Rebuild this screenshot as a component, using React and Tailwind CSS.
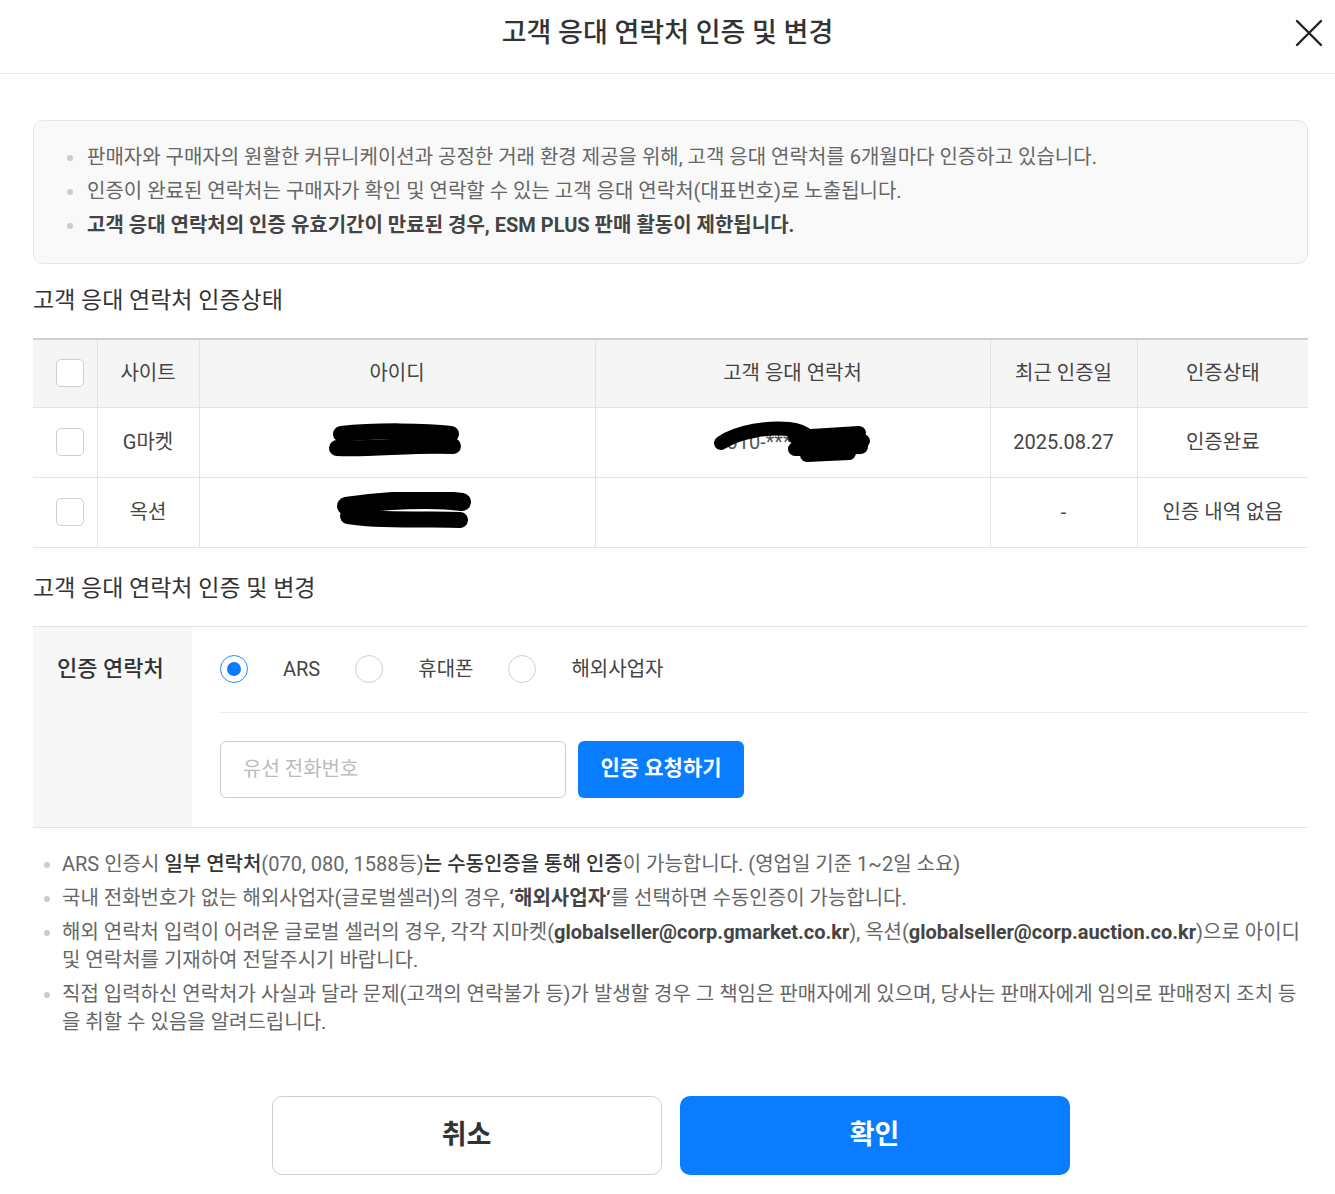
import { useState } from "react";

const rows = [
  { site: "G마켓", date: "2025.08.27", status: "인증완료", phone: true, blob: "a" },
  { site: "옥션", date: "-", status: "인증 내역 없음", phone: false, blob: "b" },
];

// 가림 처리(검은 낙서) 모양
function Scribble({ kind }) {
  if (kind === "a") {
    return (
      <svg width="140" height="40" viewBox="0 0 140 40">
        <path d="M14 12 C 50 8, 100 9, 124 12" stroke="#000" strokeWidth="16" strokeLinecap="round" fill="none" />
        <path d="M10 26 C 40 28, 90 22, 126 24" stroke="#000" strokeWidth="16" strokeLinecap="round" fill="none" />
      </svg>
    );
  }
  return (
    <svg width="140" height="40" viewBox="0 0 140 40">
      <path d="M12 14 C 50 8, 100 6, 128 10" stroke="#000" strokeWidth="18" strokeLinecap="round" fill="none" />
      <path d="M14 24 C 50 30, 100 26, 126 28" stroke="#000" strokeWidth="16" strokeLinecap="round" fill="none" />
    </svg>
  );
}

function PhoneScribble() {
  return (
    <svg width="166" height="42" viewBox="0 0 166 42" className="absolute left-[-4px] top-[-2px]">
      <path d="M12 22 C 30 10, 60 6, 80 8 C 90 9, 96 12, 100 16" stroke="#000" strokeWidth="14" strokeLinecap="round" fill="none" />
      <path d="M86 16 L 150 12 M 86 28 L 152 26 M 92 22 L 154 20 M 98 34 L 140 32" stroke="#000" strokeWidth="14" strokeLinecap="round" fill="none" />
    </svg>
  );
}

function Check() {
  return <span className="block w-[28px] h-[28px] rounded-[5px] border border-[#cfcfcf] bg-white" />;
}

function Radio({ on }) {
  return on ? (
    <span className="flex items-center justify-center w-[28px] h-[28px] rounded-full border-[1.5px] border-[#2a8bff] bg-white">
      <span className="block w-[14px] h-[14px] rounded-full bg-[#0a7cff]" />
    </span>
  ) : (
    <span className="block w-[28px] h-[28px] rounded-full border border-[#cfcfcf] bg-white" />
  );
}

function Dot() {
  return <span className="shrink-0 mt-[12px] w-[6px] h-[6px] rounded-full bg-[#cccccc]" />;
}

export default function App() {
  const [method, setMethod] = useState("ARS");

  return (
    <div className="w-[1335px] min-h-[1194px] bg-white text-[#333]" style={{ fontFamily: 'Roboto, "Noto Sans CJK KR", sans-serif' }}>
      {/* 헤더 */}
      <header className="relative h-[74px] flex items-center justify-center pb-[6px] border-b border-[#ececec]">
        <h1 className="text-[27px] font-medium text-[#333]">고객 응대 연락처 인증 및 변경</h1>
        <button className="absolute right-[12px] top-[19px] w-[28px] h-[28px]">
          <svg width="28" height="28" viewBox="0 0 28 28">
            <path d="M2 2 L26 26 M26 2 L2 26" stroke="#222" strokeWidth="2.4" strokeLinecap="round" />
          </svg>
        </button>
      </header>

      <div className="pl-[33px] pr-[27px] pt-[46px]">
        {/* 안내 박스 */}
        <div className="rounded-[10px] border border-[#e6e6e6] bg-[#f9f9f9] pl-[33px] pr-4 pt-[22px] pb-[24px] text-[20px] text-[#666]">
          <ul className="flex flex-col gap-[6px] leading-[28px]">
            <li className="flex gap-[14px]"><Dot />판매자와 구매자의 원활한 커뮤니케이션과 공정한 거래 환경 제공을 위해, 고객 응대 연락처를 6개월마다 인증하고 있습니다.</li>
            <li className="flex gap-[14px]"><Dot />인증이 완료된 연락처는 구매자가 확인 및 연락할 수 있는 고객 응대 연락처(대표번호)로 노출됩니다.</li>
            <li className="flex gap-[14px] font-bold text-[#444]"><Dot />고객 응대 연락처의 인증 유효기간이 만료된 경우, ESM PLUS 판매 활동이 제한됩니다.</li>
          </ul>
        </div>

        {/* 인증상태 */}
        <h2 className="mt-[22px] text-[23px] text-[#333] leading-[30px]">고객 응대 연락처 인증상태</h2>
        <table className="mt-[22px] w-full border-collapse text-[20px] text-[#444]">
          <thead>
            <tr className="h-[68px] bg-[#f5f5f5] border-t-2 border-[#cfcfcf]">
              <th className="w-[64px] border-r border-[#e3e3e3] font-normal"><div className="flex pl-[23px]"><Check /></div></th>
              <th className="w-[102px] border-r border-[#e3e3e3] font-normal">사이트</th>
              <th className="w-[396px] border-r border-[#e3e3e3] font-normal">아이디</th>
              <th className="w-[395px] border-r border-[#e3e3e3] font-normal">고객 응대 연락처</th>
              <th className="w-[147px] border-r border-[#e3e3e3] font-normal">최근 인증일</th>
              <th className="font-normal">인증상태</th>
            </tr>
          </thead>
          <tbody>
            {rows.map((r) => (
              <tr key={r.site} className="h-[70px] border-t border-b border-[#e3e3e3]">
                <td className="border-r border-[#e3e3e3]"><div className="flex pl-[23px]"><Check /></div></td>
                <td className="border-r border-[#e3e3e3] text-center">{r.site}</td>
                <td className="border-r border-[#e3e3e3]">
                  <div className={r.blob === "a" ? "flex justify-center" : "flex justify-center pl-[14px]"}>
                    <Scribble kind={r.blob} />
                  </div>
                </td>
                <td className="border-r border-[#e3e3e3]">
                  {r.phone && (
                    <div className="flex justify-center">
                      <div className="relative w-[160px] h-[38px] pl-[14px] leading-[38px] text-[#555]">
                        010-****-****
                        <PhoneScribble />
                      </div>
                    </div>
                  )}
                </td>
                <td className="border-r border-[#e3e3e3] text-center">{r.date}</td>
                <td className="text-center">{r.status}</td>
              </tr>
            ))}
          </tbody>
        </table>

        {/* 인증 및 변경 */}
        <h2 className="mt-[26px] text-[23px] text-[#333] leading-[30px]">고객 응대 연락처 인증 및 변경</h2>
        <div className="mt-[22px] flex border-t border-b border-[#e3e3e3]">
          <div className="w-[159px] shrink-0 bg-[#f7f7f7] pl-[24px] pt-[27px] text-[22px] text-[#333] font-medium leading-[30px]">인증 연락처</div>
          <div className="flex-1 pl-[28px]">
            <div className="h-[86px] flex items-center border-b border-[#ececec] text-[20px] text-[#444]">
              {["ARS", "휴대폰", "해외사업자"].map((m) => (
                <label key={m} className="flex items-center mr-[35px] cursor-pointer" onClick={() => setMethod(m)}>
                  <Radio on={method === m} />
                  <span className="ml-[35px]">{m}</span>
                </label>
              ))}
            </div>
            <div className="flex gap-[12px] pt-[28px] pb-[29px]">
              <input
                placeholder="유선 전화번호"
                className="w-[346px] h-[57px] rounded-[6px] border border-[#cdcdcd] px-[22px] text-[20px] placeholder:text-[#bbb] outline-none"
              />
              <button className="w-[166px] h-[57px] rounded-[6px] bg-[#0a7cff] text-white text-[21px] font-bold">인증 요청하기</button>
            </div>
          </div>
        </div>

        {/* 유의사항 */}
        <ul className="mt-[22px] pl-[11px] flex flex-col gap-[6px] text-[20px] text-[#666] leading-[28px]">
          <li className="flex gap-[12px]"><Dot /><span>ARS 인증시 <b className="font-medium text-[#333]">일부 연락처</b>(070, 080, 1588등)<b className="font-medium text-[#333]">는 수동인증을 통해 인증</b>이 가능합니다. (영업일 기준 1~2일 소요)</span></li>
          <li className="flex gap-[12px]"><Dot /><span>국내 전화번호가 없는 해외사업자(글로벌셀러)의 경우, <b className="font-bold text-[#444]">‘해외사업자’</b>를 선택하면 수동인증이 가능합니다.</span></li>
          <li className="flex gap-[12px]"><Dot /><span>해외 연락처 입력이 어려운 글로벌 셀러의 경우, 각각 지마켓(<b className="font-bold text-[#444]">globalseller@corp.gmarket.co.kr</b>), 옥션(<b className="font-bold text-[#444]">globalseller@corp.auction.co.kr</b>)으로 아이디 및 연락처를 기재하여 전달주시기 바랍니다.</span></li>
          <li className="flex gap-[12px]"><Dot /><span>직접 입력하신 연락처가 사실과 달라 문제(고객의 연락불가 등)가 발생할 경우 그 책임은 판매자에게 있으며, 당사는 판매자에게 임의로 판매정지 조치 등을 취할 수 있음을 알려드립니다.</span></li>
        </ul>

        {/* 하단 버튼 */}
        <div className="mt-[60px] flex justify-center gap-[18px]">
          <button className="w-[390px] h-[79px] rounded-[10px] border border-[#cfcfcf] bg-white text-[27px] font-bold text-[#333]">취소</button>
          <button className="w-[390px] h-[79px] rounded-[10px] bg-[#0a7cff] text-[27px] font-bold text-white">확인</button>
        </div>
      </div>
    </div>
  );
}
